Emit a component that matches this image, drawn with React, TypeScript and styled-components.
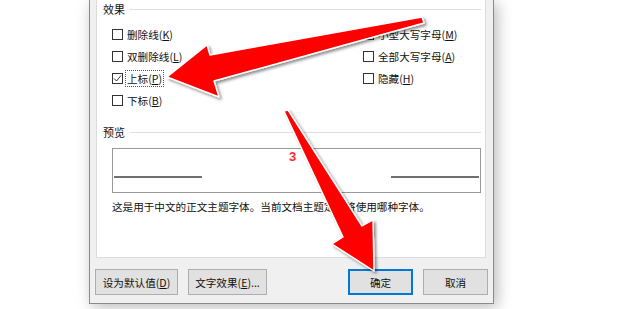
import React from 'react';
import styled, { createGlobalStyle } from 'styled-components';

const GlobalStyle = createGlobalStyle`
  body {
    margin: 0;
    background: #fff;
    font-family: "Noto Sans CJK SC", "Noto Sans", sans-serif;
  }
`;

interface Option {
  label: string;
  key: string;
  checked?: boolean;
  focused?: boolean;
}

const leftOptions: Option[] = [
  { label: '删除线', key: 'K' },
  { label: '双删除线', key: 'L' },
  { label: '上标', key: 'P', checked: true, focused: true },
  { label: '下标', key: 'B' },
];

const rightOptions: Option[] = [
  { label: '小型大写字母', key: 'M' },
  { label: '全部大写字母', key: 'A' },
  { label: '隐藏', key: 'H' },
];

const CheckOption = ({ option }: { option: Option }) => (
  <Row>
    <Box>
      {option.checked ? (
        <svg width="9" height="9" viewBox="0 0 9 9">
          <path d="M1 4.5 L3.5 7 L8 1.5" fill="none" stroke="#333" strokeWidth="1" />
        </svg>
      ) : null}
    </Box>
    <Label $focused={option.focused}>
      {option.label}(<u>{option.key}</u>)
    </Label>
  </Row>
);

const Arrows = () => (
  <Overlay width="620" height="309" viewBox="0 0 620 309">
    <defs>
      <filter id="shadow" x="-20%" y="-20%" width="140%" height="140%">
        <feDropShadow dx="2" dy="2" stdDeviation="1.6" floodColor="#000" floodOpacity="0.45" />
      </filter>
    </defs>
    <g fill="#ff0000" stroke="#fff" strokeWidth="1.4" strokeLinejoin="round" filter="url(#shadow)">
      <polygon points="422,17 210,55 207,45 167,77 219,97 214,81 424,23" />
      <polygon points="284,111 343,237 332,244 374,271 373,220 362,226 288,110" />
    </g>
  </Overlay>
);

const App = () => (
  <Stage>
    <GlobalStyle />
    <Dialog>
      <Panel>
        <Legend>
          <span>效果</span>
          <Rule />
        </Legend>
        <Columns>
          <Column $width={251}>
            {leftOptions.map(o => (
              <CheckOption key={o.key} option={o} />
            ))}
          </Column>
          <Column>
            {rightOptions.map(o => (
              <CheckOption key={o.key} option={o} />
            ))}
          </Column>
        </Columns>
        <Legend $gap={12}>
          <span>预览</span>
          <Rule />
        </Legend>
        <Preview>
          <Baseline />
          <Sup>3</Sup>
          <Baseline />
        </Preview>
        <Note>这是用于中文的正文主题字体。当前文档主题定义将使用哪种字体。</Note>
      </Panel>
      <ButtonRow>
        <Group>
          <Button $width={83}>
            设为默认值(<u>D</u>)
          </Button>
          <Button $width={79}>
            文字效果(<u>E</u>)...
          </Button>
        </Group>
        <Group>
          <Button $width={65} $primary>
            确定
          </Button>
          <Button $width={65}>取消</Button>
        </Group>
      </ButtonRow>
    </Dialog>
    <Arrows />
  </Stage>
);

export default App;

const Stage = styled.div`
  position: relative;
  width: 620px;
  height: 309px;
  overflow: hidden;
  background: #fff;
  font-size: 10.6px;
  color: #111;
`;

const Dialog = styled.div`
  margin-left: 89px;
  width: 405px;
  height: 304px;
  box-sizing: border-box;
  background: #f0f0f0;
  border: 1px solid #8a8a8a;
  border-top: none;
  box-shadow: 3px 3px 14px rgba(0, 0, 0, 0.28);
  display: flex;
  flex-direction: column;
`;

const Panel = styled.div`
  margin: 0 7px 0 6px;
  height: 258px;
  box-sizing: border-box;
  background: #fff;
  border: 1px solid #dcdcdc;
  border-top: none;
  padding: 0 4px 0 6px;
  display: flex;
  flex-direction: column;
`;

const Legend = styled.div<{ $gap?: number }>`
  display: flex;
  align-items: center;
  height: 18px;
  margin-top: ${p => p.$gap || 0}px;
  line-height: 18px;
  font-size: 11px;
`;

const Rule = styled.div`
  flex: 1;
  height: 1px;
  margin-left: 5px;
  background: #dedede;
`;

const Columns = styled.div`
  display: flex;
  margin: 5px 0 0 9px;
`;

const Column = styled.div<{ $width?: number }>`
  display: flex;
  flex-direction: column;
  width: ${p => (p.$width ? `${p.$width}px` : 'auto')};
`;

const Row = styled.div`
  display: flex;
  align-items: center;
  height: 22px;
`;

const Box = styled.span`
  width: 11px;
  height: 11px;
  box-sizing: border-box;
  border: 1px solid #333;
  background: #fff;
  display: flex;
  align-items: center;
  justify-content: center;
`;

const Label = styled.span<{ $focused?: boolean }>`
  margin-left: 2px;
  padding: 0 1px;
  line-height: 15px;
  border: 1px dotted ${p => (p.$focused ? '#555' : 'transparent')};
  white-space: nowrap;
`;

const Preview = styled.div`
  margin: 7px 0 0 9px;
  height: 45px;
  box-sizing: border-box;
  border: 1px solid #999;
  padding: 0 1px;
  display: grid;
  grid-template-columns: 88px 1fr 88px;
  align-items: start;
`;

const Baseline = styled.div`
  margin-top: 27px;
  height: 2px;
  background: #707070;
`;

const Sup = styled.div`
  text-align: center;
  padding-right: 8px;
  font-family: "Liberation Sans", sans-serif;
  font-weight: bold;
  font-size: 13px;
  line-height: 14px;
  margin-top: 1px;
  color: #ff2a2a;
`;

const Note = styled.div`
  margin: 6px 0 0 9px;
  line-height: 16px;
  white-space: nowrap;
`;

const ButtonRow = styled.div`
  display: flex;
  justify-content: space-between;
  margin-top: 11px;
  padding: 0 5px;
`;

const Group = styled.div`
  display: flex;
  gap: 10px;
`;

const Button = styled.div<{ $width: number; $primary?: boolean }>`
  width: ${p => p.$width}px;
  height: 26px;
  box-sizing: border-box;
  background: #e1e1e1;
  border: ${p => (p.$primary ? '2px solid #0078d7' : '1px solid #adadad')};
  display: flex;
  align-items: center;
  justify-content: center;
  white-space: nowrap;
`;

const Overlay = styled.svg`
  position: absolute;
  top: 0;
  left: 0;
  pointer-events: none;
`;
